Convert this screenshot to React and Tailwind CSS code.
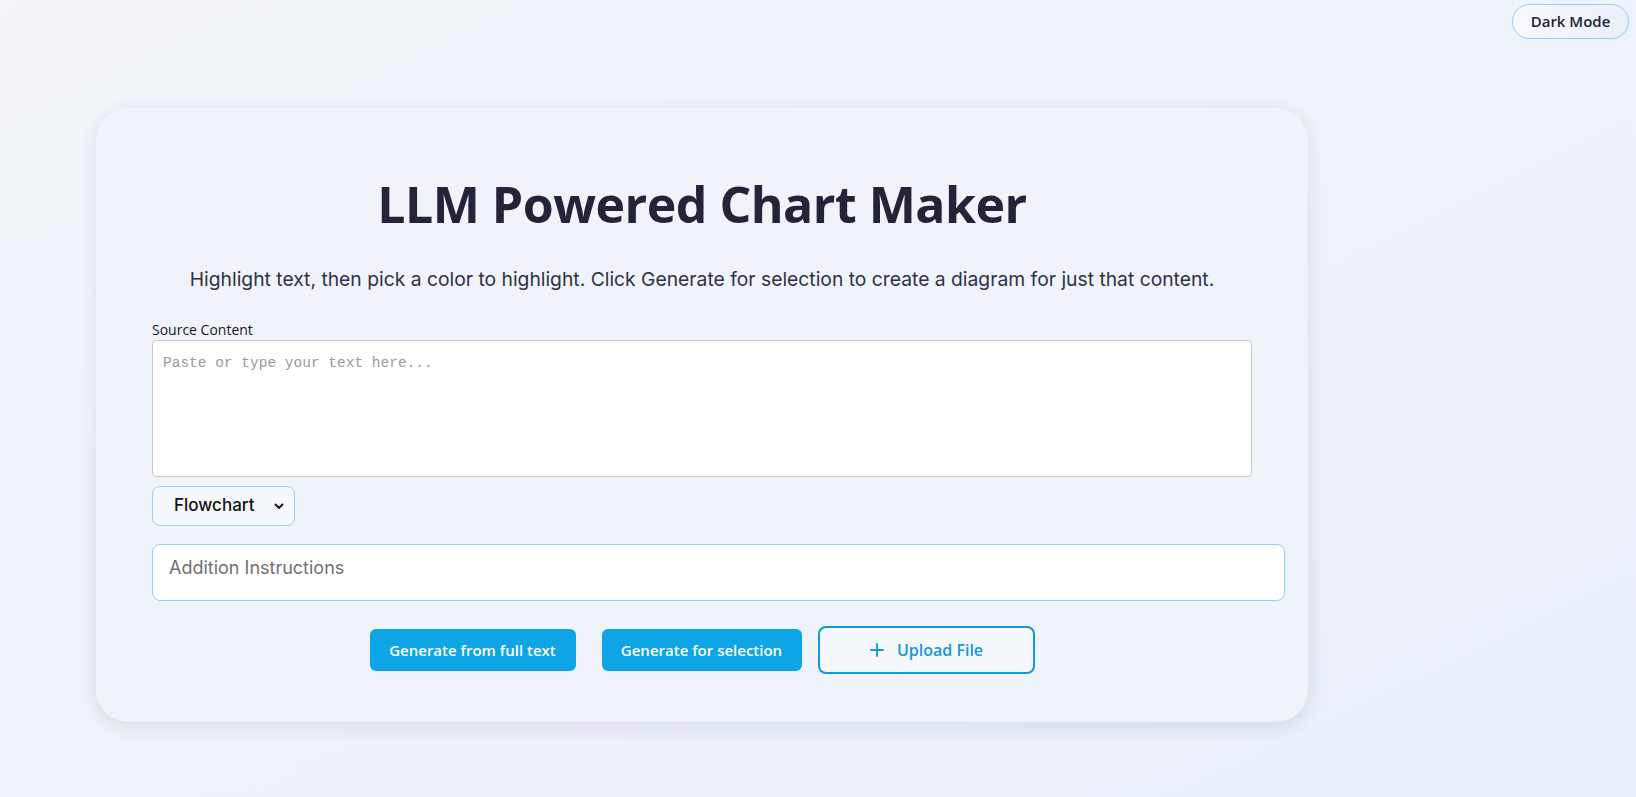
import React, { useState } from "react";

export default function App() {
  const [text, setText] = useState("");
  const [kind, setKind] = useState("flowchart");
  const [extra, setExtra] = useState("");

  return (
    <div className="relative min-h-screen w-full overflow-hidden bg-gradient-to-br from-[#f4f6fb] to-[#e9eff9] font-['Open_Sans',sans-serif]">
      <button
        type="button"
        className="absolute right-[7px] top-[4px] h-[35px] w-[117px] rounded-full border border-[#8fd0f7] bg-gradient-to-r from-[#f7f9fd] to-[#eaf0f9] text-[15px] font-semibold text-[#23233a]"
      >
        Dark Mode
      </button>

      <div className="pl-[96px] pt-[108px]">
        <div className="h-[614px] w-[1212px] rounded-[32px] bg-[#eff3fa] px-[56px] pt-[66px] shadow-[0_4px_18px_rgba(30,50,90,0.12)]">
          <h1 className="text-center text-[50px] font-bold leading-[1.2] tracking-[-0.5px] text-[#23233a]">
            LLM Powered Chart Maker
          </h1>
          <p className="mt-[31px] text-center font-['Inter',sans-serif] text-[19.3px] leading-[1.5] text-[#2e3147]">
            Highlight text, then pick a color to highlight. Click Generate for selection to create a diagram for just that content.
          </p>

          <label className="mt-[26px] block text-[14px] leading-[20px] text-[#1a1a1a]">Source Content</label>
          <textarea
            className="block h-[137px] w-[1100px] resize-none rounded-[4px] border border-[#c8c8c8] bg-white px-[10px] pb-[10px] pt-[12px] font-['Liberation_Mono',monospace] text-[14.5px] text-[#333] placeholder:text-[#9a9a9a] focus:outline-none"
            placeholder="Paste or type your text here..."
            value={text}
            onChange={(e) => setText(e.target.value)}
          />

          <div className="mt-[9px] flex h-[40px] w-[143px] items-center justify-between rounded-[8px] border border-[#91d1f8] bg-[#f5f9fd] pl-[21px] pr-[9px]">
            <select
              className="w-full appearance-none bg-transparent font-['Inter',sans-serif] text-[17px] font-medium text-[#111] focus:outline-none"
              value={kind}
              onChange={(e) => setKind(e.target.value)}
            >
              <option value="flowchart">Flowchart</option>
              <option value="sequence">Sequence</option>
              <option value="mindmap">Mindmap</option>
            </select>
            <svg width="12" height="12" viewBox="0 0 12 12" className="shrink-0">
              <path d="M2.5 4.5 6 8l3.5-3.5" fill="none" stroke="#111" strokeWidth="1.9" strokeLinecap="round" strokeLinejoin="round" />
            </svg>
          </div>

          <input
            className="mt-[18px] block h-[57px] w-[1133px] rounded-[8px] border border-[#91d1f8] bg-white px-[16px] pb-[10px] font-['Inter',sans-serif] text-[18px] text-[#333] placeholder:text-[#707070] focus:outline-none"
            placeholder="Addition Instructions"
            value={extra}
            onChange={(e) => setExtra(e.target.value)}
          />

          <div className="mt-[25px] flex items-center justify-center">
            <button
              type="button"
              className="h-[42px] w-[206px] rounded-[6px] bg-[#0ea5e6] text-[15px] font-semibold text-white"
            >
              Generate from full text
            </button>
            <button
              type="button"
              className="ml-[26px] h-[42px] w-[200px] rounded-[6px] bg-[#0ea5e6] text-[15px] font-semibold text-white"
            >
              Generate for selection
            </button>
            <button
              type="button"
              className="ml-[16px] flex h-[48px] w-[217px] items-center justify-center gap-[12px] rounded-[8px] border-2 border-[#1197de] bg-[#f5f8fd] text-[16px] font-semibold text-[#1597dc]"
            >
              <svg width="16" height="16" viewBox="0 0 16 16">
                <path d="M8 2v12M2 8h12" stroke="#1597dc" strokeWidth="1.8" strokeLinecap="round" />
              </svg>
              Upload File
            </button>
          </div>
        </div>
      </div>
    </div>
  );
}
